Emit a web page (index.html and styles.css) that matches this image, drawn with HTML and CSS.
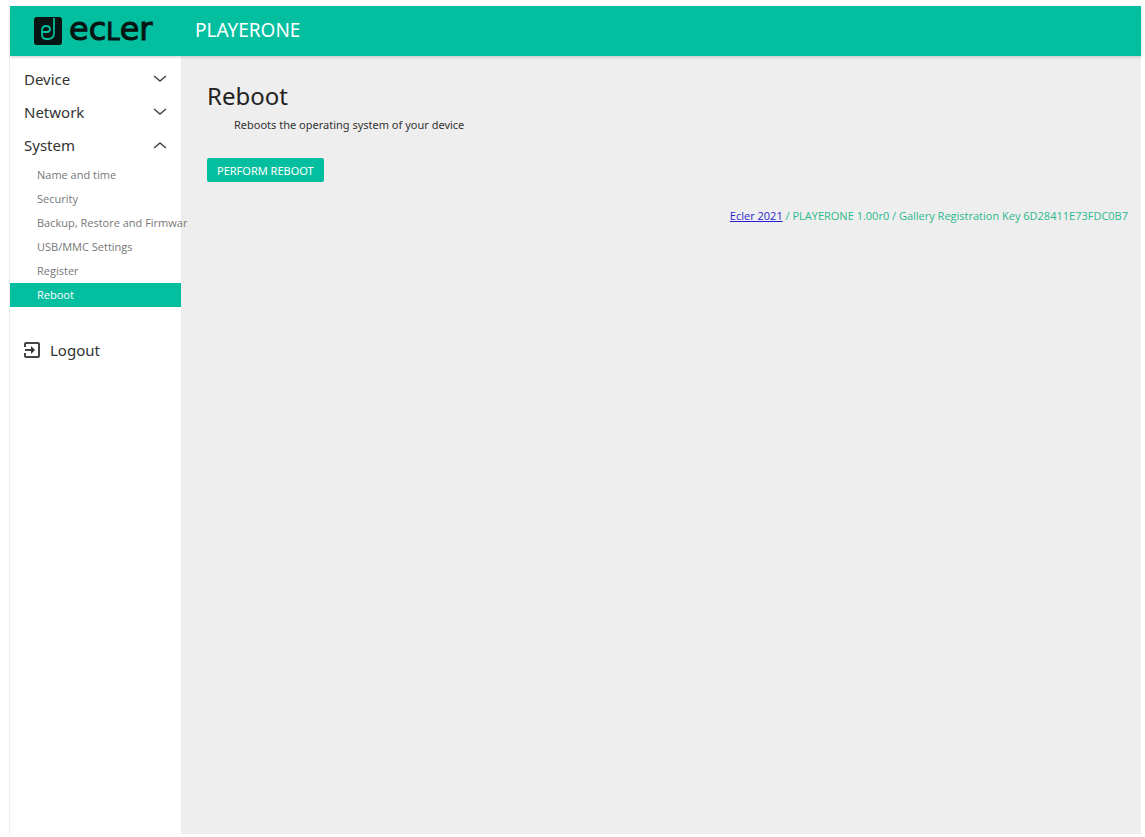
FILE: index.html
```
<!DOCTYPE html>
<html lang="en">
  <head>
    <meta charset="utf-8">
    <meta name="viewport" content="width=device-width, initial-scale=1">
    <title>PLAYERONE</title>
    <link rel="stylesheet" href="styles.css">
  </head>
  <body>
    <header class="topbar">
      <div class="logo">
        <svg class="logo-mark" viewBox="0 0 28 28" aria-hidden="true">
          <rect width="28" height="28" rx="3" fill="#061512"/>
          <path d="M8 15H13Q16 15 16 12Q16 9 12 9Q8 9 8 14V17Q8 22 12 22H14Q20 22 20 16V1" fill="none" stroke="#04bf9f" stroke-width="1.8"/>
        </svg>
        <span class="logo-name">ec<span class="logo-l">l</span>er</span>
      </div>
      <span class="product">PLAYERONE</span>
    </header>

    <div class="content">
      <nav class="sidebar">
        <button class="group">Device
          <svg class="chevron" viewBox="0 0 14 8"><path d="M1 1L7 6L13 1"/></svg>
        </button>
        <button class="group">Network
          <svg class="chevron" viewBox="0 0 14 8"><path d="M1 1L7 6L13 1"/></svg>
        </button>
        <button class="group">System
          <svg class="chevron" viewBox="0 0 14 8"><path d="M1 7L7 2L13 7"/></svg>
        </button>
        <ul class="submenu">
          <li><a href="#name">Name and time</a></li>
          <li><a href="#security">Security</a></li>
          <li><a href="#backup">Backup, Restore and Firmwar</a></li>
          <li><a href="#usb">USB/MMC Settings</a></li>
          <li><a href="#register">Register</a></li>
          <li><a class="active" href="#reboot">Reboot</a></li>
        </ul>
        <a class="logout" href="#logout">
          <svg class="logout-icon" viewBox="0 0 16 16" aria-hidden="true">
            <path d="M1 5V2Q1 1 2 1H14Q15 1 15 2V14Q15 15 14 15H2Q1 15 1 14V11M1 8H10"/>
            <path class="arrow" d="M7 4L11 8L7 12Z"/>
          </svg>
          Logout
        </a>
      </nav>

      <main class="main">
        <h1>Reboot</h1>
        <p class="description">Reboots the operating system of your device</p>
        <button class="action">PERFORM REBOOT</button>
        <footer class="footer"><a href="#ecler">Ecler 2021</a> / PLAYERONE 1.00r0 / Gallery Registration Key 6D28411E73FDC0B7</footer>
      </main>
    </div>
  </body>
</html>
```

FILE: styles.css
```
* { box-sizing: border-box; }
body {
  display: flex;
  flex-direction: column;
  min-height: 100vh;
  margin: 0;
  padding: 6px 4px 3px 10px;
  background: white;
  color: #333;
  font-family: "Noto Sans", "Open Sans", sans-serif;
}
button { font-family: inherit; border: none; cursor: pointer; }

.topbar {
  display: flex;
  align-items: center;
  height: 50px;
  background: #04bf9f;
  box-shadow: 0 1px 3px rgba(0, 0, 0, 0.2);
  z-index: 2;
}
.logo {
  display: flex;
  align-items: center;
  gap: 7px;
  width: 185px;
  padding-left: 24px;
  color: #061512;
}
.logo-mark { width: 28px; height: 28px; }
.logo-name {
  font-family: "DejaVu Sans", sans-serif;
  font-size: 32px;
  line-height: 32px;
  padding-bottom: 2px;
  -webkit-text-stroke: 1px #061512;
}
.logo-l { font-size: 24px; text-transform: uppercase; }
.product { color: white; font-size: 19px; line-height: 24px; padding-bottom: 2px; }

.content { display: flex; flex: 1; }
.sidebar {
  width: 171px;
  flex-shrink: 0;
  padding-top: 6px;
  box-shadow: -1px 0 #eee;
  z-index: 1;
}
.group {
  display: flex;
  align-items: center;
  justify-content: space-between;
  width: 100%;
  height: 33px;
  padding: 0 14px;
  background: none;
  color: #333;
  font-size: 15px;
}
.chevron { width: 14px; height: 8px; fill: none; stroke: #444; stroke-width: 1.5; }
.submenu { list-style: none; margin: 0; padding: 2px 0 0; }
.submenu a {
  display: block;
  padding-left: 27px;
  color: #777;
  font-family: "Open Sans", sans-serif;
  font-size: 11px;
  line-height: 24px;
  white-space: nowrap;
  text-decoration: none;
}
.submenu .active { background: #04bf9f; color: white; }
.logout {
  display: flex;
  align-items: center;
  gap: 10px;
  margin-top: 33px;
  padding-left: 14px;
  color: #333;
  font-size: 15px;
  text-decoration: none;
}
.logout-icon { width: 16px; height: 16px; fill: none; stroke: #444; stroke-width: 2; }
.logout-icon .arrow { fill: #333; stroke: none; }

.main { flex: 1; padding: 24px 13px 24px 26px; background: #eee; }
h1 { margin: 0; color: #222; font-size: 24px; font-weight: normal; line-height: 32px; }
.description { margin: 4px 0 24px 27px; font-size: 11px; line-height: 18px; }
.action {
  display: block;
  height: 24px;
  padding: 0 10px;
  border-radius: 2px;
  background: #04bf9f;
  color: white;
  font-size: 11px;
}
.footer {
  margin-top: 25px;
  color: #2bb98c;
  font-family: "Open Sans", sans-serif;
  font-size: 11px;
  line-height: 18px;
  text-align: right;
}
.footer a { color: #2a1fd0; }
```
